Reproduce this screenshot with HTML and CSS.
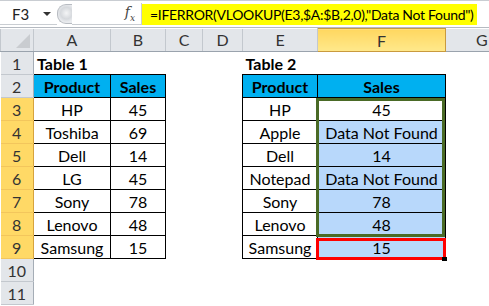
FILE: index.html
```html
<!DOCTYPE html>
<html lang="en">
<head>
    <meta charset="UTF-8">
    <title>IFERROR VLOOKUP</title>
    <link rel="stylesheet" href="styles.css">
</head>
<body>
    <div class="formula-bar">
        <div class="name-box">
            <span class="ref">F3</span>
            <span class="drop"></span>
        </div>
        <div class="grip"></div>
        <div class="fx-zone"><span class="fx">f<sub>x</sub></span></div>
        <div class="formula">=IFERROR(VLOOKUP(E3,$A:$B,2,0),"Data Not Found")</div>
    </div>

    <div class="sheet">
        <table class="grid">
            <colgroup>
                <col style="width:33px"><col style="width:77px"><col style="width:55px"><col style="width:37px">
                <col style="width:40px"><col style="width:75px"><col style="width:128px"><col style="width:44px">
            </colgroup>
            <tr class="head-row">
                <th class="corner"><span class="tri"></span></th>
                <th>A</th><th>B</th><th>C</th><th>D</th><th>E</th><th class="hot">F</th><th class="last">G</th>
            </tr>
            <tr>
                <th class="rh">1</th>
                <td class="title">Table 1</td><td></td><td></td><td></td>
                <td class="title">Table 2</td><td></td><td></td>
            </tr>
            <tr>
                <th class="rh">2</th>
                <td class="b hd">Product</td><td class="b hd">Sales</td><td></td><td></td>
                <td class="b hd">Product</td><td class="b hd">Sales</td><td></td>
            </tr>
            <tr>
                <th class="rh hot">3</th>
                <td class="b">HP</td><td class="b">45</td><td></td><td></td>
                <td class="b">HP</td><td class="b">45</td><td></td>
            </tr>
            <tr>
                <th class="rh hot">4</th>
                <td class="b">Toshiba</td><td class="b">69</td><td></td><td></td>
                <td class="b">Apple</td><td class="b sel">Data Not Found</td><td></td>
            </tr>
            <tr>
                <th class="rh hot">5</th>
                <td class="b">Dell</td><td class="b">14</td><td></td><td></td>
                <td class="b">Dell</td><td class="b sel">14</td><td></td>
            </tr>
            <tr>
                <th class="rh hot">6</th>
                <td class="b">LG</td><td class="b">45</td><td></td><td></td>
                <td class="b">Notepad</td><td class="b sel">Data Not Found</td><td></td>
            </tr>
            <tr>
                <th class="rh hot">7</th>
                <td class="b">Sony</td><td class="b">78</td><td></td><td></td>
                <td class="b">Sony</td><td class="b sel">78</td><td></td>
            </tr>
            <tr>
                <th class="rh hot">8</th>
                <td class="b">Lenovo</td><td class="b">48</td><td></td><td></td>
                <td class="b">Lenovo</td><td class="b sel">48</td><td></td>
            </tr>
            <tr>
                <th class="rh hot">9</th>
                <td class="b">Samsung</td><td class="b">15</td><td></td><td></td>
                <td class="b">Samsung</td><td class="b sel">15</td><td></td>
            </tr>
            <tr>
                <th class="rh">10</th>
                <td></td><td></td><td></td><td></td><td></td><td></td><td></td>
            </tr>
            <tr>
                <th class="rh">11</th>
                <td></td><td></td><td></td><td></td><td></td><td></td><td></td>
            </tr>
        </table>

        <!-- outlines drawn over the cells -->
        <div class="box-green"></div>
        <div class="box-red"></div>
        <div class="fill-handle"></div>
    </div>
</body>
</html>
```

FILE: styles.css
```css
body {
    margin: 0;
    background-color: #fff;
    font-family: 'Lato', 'Open Sans', sans-serif;
    color: #000;
    width: 489px;
    height: 306px;
    overflow: hidden;
}

/* formula bar */
.formula-bar {
    display: flex;
    align-items: center;
    height: 27px;
    border-top: 1px solid #c9cdd2;
    box-sizing: border-box;
    background-color: #fff;
}
.name-box {
    display: flex;
    align-items: center;
    justify-content: space-between;
    flex: none;
    width: 57px;
    height: 22px;
    box-sizing: border-box;
    padding: 0 6px 0 12px;
    border-bottom: 1px solid #c9cdd2;
    font-size: 15px;
    color: #222;
}
.drop {
    width: 0;
    height: 0;
    border-left: 4px solid transparent;
    border-right: 4px solid transparent;
    border-top: 4px solid #333;
}
.grip {
    flex: none;
    width: 14px;
    height: 18px;
    border-radius: 9px 0 0 9px;
    border: 1px solid #b8bcc2;
    border-right: none;
    background: radial-gradient(circle at 60% 45%, #f4f5f6 0, #d6d9dd 45%, #e9ebee 70%);
}
.fx-zone {
    flex: none;
    width: 70px;
    height: 22px;
    display: flex;
    align-items: center;
    justify-content: flex-end;
    padding-right: 6px;
    border-bottom: 1px solid #c9cdd2;
    border-right: 1px solid #c9cdd2;
    box-sizing: border-box;
}
.fx {
    font-family: 'DejaVu Serif', 'Liberation Serif', serif;
    font-style: italic;
    font-size: 14px;
    color: #444;
}
.fx sub {
    font-size: 9px;
}
.formula {
    flex: none;
    width: 335px;
    height: 21px;
    line-height: 21px;
    padding-left: 8px;
    box-sizing: border-box;
    background-color: #ffff00;
    font-size: 14px;
    letter-spacing: -0.3px;
    white-space: nowrap;
    overflow: hidden;
}

/* sheet */
.sheet {
    position: relative;
    border-top: 1px solid #b5bac1;
}
.grid {
    border-collapse: collapse;
    table-layout: fixed;
    width: 489px;
}
.grid th {
    font-weight: normal;
    background-color: #e3e6ea;
    color: #333;
    font-size: 16px;
    padding: 0;
    border: 1px solid #c3c8ce;
}
.head-row {
    height: 22px;
}
.head-row th {
    border-top: none;
    border-bottom: 1px solid #9aa3ad;
}
.head-row th.last {
    border-right: none;
    text-align: left;
    padding-left: 30px;
    overflow: visible;
}
.head-row th.hot {
    background: linear-gradient(#ffd760, #ffe98c);
    border: 1px solid #c99a3e;
}
.corner {
    position: relative;
}
.tri {
    position: absolute;
    right: 3px;
    bottom: 3px;
    width: 0;
    height: 0;
    border-left: 14px solid transparent;
    border-bottom: 14px solid #c9ccd0;
}
.grid tr {
    height: 23px;
}
.grid th.rh {
    border-left: none;
    border-right: 1px solid #a5adb6;
}
.grid th.rh.hot {
    background-color: #ffd966;
    border-bottom-color: #f3c65c;
    border-right-color: #d6a33e;
}
.grid td {
    padding: 0;
    font-size: 16px;
    text-align: center;
    white-space: nowrap;
}
.grid td.b {
    border: 1px solid #000;
}
.grid td.hd {
    background-color: #00b0f0;
    font-weight: bold;
}
.grid td.title {
    text-align: left;
    padding-left: 3px;
    font-weight: bold;
}
.grid td.sel {
    background-color: #b8d8fb;
}

/* outlines */
.box-green {
    position: absolute;
    left: 316px;
    top: 70px;
    width: 129px;
    height: 139px;
    box-sizing: border-box;
    border: 3px solid #4a6a26;
}
.box-red {
    position: absolute;
    left: 316px;
    top: 210px;
    width: 130px;
    height: 22px;
    box-sizing: border-box;
    border: 3px solid #ff0000;
}
.fill-handle {
    position: absolute;
    left: 442px;
    top: 229px;
    width: 5px;
    height: 4px;
    background-color: #000;
}
```
